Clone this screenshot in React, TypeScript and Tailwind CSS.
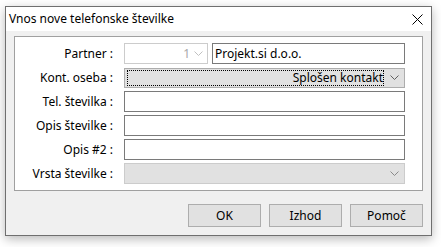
import React from "react";

const Chevron = ({ color }: { color: string }) => (
  <svg width="9" height="5" viewBox="0 0 9 5" className="shrink-0">
    <path d="M0.5 0.5 L4.5 4.5 L8.5 0.5" fill="none" stroke={color} strokeWidth="1" />
  </svg>
);

const Label = ({ text }: { text: string }) => (
  <div className="w-[99px] text-right pr-[1px] leading-[21px] text-black">{text}</div>
);

export default function App() {
  return (
    <div
      className="w-[441px] h-[247px] bg-white pl-[5px] pt-[6px] text-[12px]"
      style={{ fontFamily: '"Noto Sans", "Segoe UI", sans-serif' }}
    >
      <div className="w-[427px] h-[230px] border border-[#6f6f6f] bg-[#f0f0f0] flex flex-col shadow-[0_3px_10px_rgba(0,0,0,0.28)]">
        {/* title bar */}
        <div className="h-[24px] bg-white flex items-center justify-between pl-[3px] pr-[8px]">
          <span className="text-[12px] text-black leading-none">Vnos nove telefonske številke</span>
          <svg width="11" height="11" viewBox="0 0 11 11">
            <path d="M0.5 0.5 L10.5 10.5 M10.5 0.5 L0.5 10.5" stroke="#000" strokeWidth="1" />
          </svg>
        </div>
        {/* panel */}
        <div className="mt-[5px] mx-[8px] h-[155px] border border-[#a0a0a0] bg-white pt-[6px] flex flex-col gap-[3px]">
          <div className="flex items-center h-[21px]">
            <Label text="Partner :" />
            <div className="ml-[10px] w-[84px] h-[21px] border border-[#cccccc] bg-white flex items-center justify-end pr-[4px] gap-[4px] text-[#a8a8a8]">
              <span>1</span>
              <Chevron color="#c0c0c0" />
            </div>
            <div className="ml-[4px] w-[193px] h-[21px] border border-[#7a7a7a] bg-white flex items-center px-[2px] text-black">
              Projekt.si d.o.o.
            </div>
          </div>
          <div className="flex items-center h-[21px]">
            <Label text="Kont. oseba :" />
            <div className="ml-[10px] w-[281px] h-[20px] border border-[#adadad] bg-[#e1e1e1] flex items-center pl-[2px] pr-[5px]">
              <div className="flex-1 h-[16px] border border-dotted border-black flex items-center justify-end pr-[0px] text-black leading-none">
                Splošen kontakt
              </div>
              <div className="ml-[6px]">
                <Chevron color="#606060" />
              </div>
            </div>
          </div>
          <div className="flex items-center h-[21px]">
            <Label text="Tel. številka :" />
            <div className="ml-[10px] w-[281px] h-[21px] border border-[#7a7a7a] bg-white" />
          </div>
          <div className="flex items-center h-[21px]">
            <Label text="Opis številke :" />
            <div className="ml-[10px] w-[281px] h-[21px] border border-[#7a7a7a] bg-white" />
          </div>
          <div className="flex items-center h-[21px]">
            <Label text="Opis #2 :" />
            <div className="ml-[10px] w-[281px] h-[21px] border border-[#7a7a7a] bg-white" />
          </div>
          <div className="flex items-center h-[21px]">
            <Label text="Vrsta številke :" />
            <div className="ml-[10px] w-[281px] h-[21px] border border-[#cccccc] bg-[#e1e1e1] flex items-center justify-end pr-[5px]">
              <Chevron color="#8a8a8a" />
            </div>
          </div>
        </div>
        {/* buttons */}
        <div className="mt-[13px] flex justify-end gap-[8px] pr-[8px]">
          {["OK", "Izhod", "Pomoč"].map((b) => (
            <div
              key={b}
              className="w-[73px] h-[23px] border border-[#adadad] bg-[#e1e1e1] flex items-center justify-center text-black"
            >
              {b}
            </div>
          ))}
        </div>
      </div>
    </div>
  );
}
